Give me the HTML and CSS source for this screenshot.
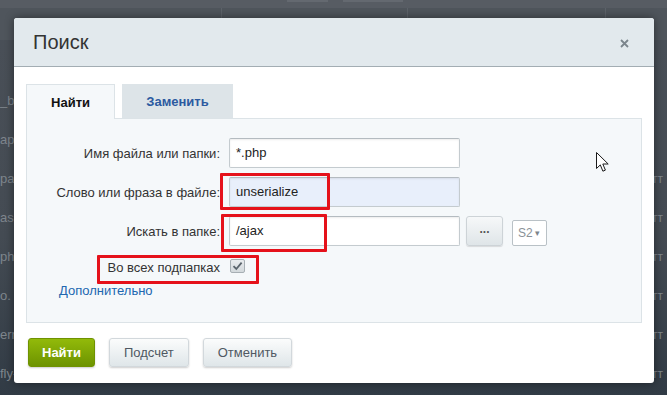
FILE: index.html
```html
<!DOCTYPE html>
<html lang="ru">
<head>
    <meta charset="UTF-8">
    <title>Поиск</title>
    <link rel="stylesheet" href="styles.css">
</head>
<body>
<div class="page">
    <div class="topbar">
        <div class="topbar-strip">
            <span class="top-btn top-btn-a"></span>
            <span class="top-btn top-btn-b"></span>
        </div>
        <div class="topbar-head">
            <span class="col col-1"></span>
            <span class="col col-2"></span>
            <span class="col col-3"></span>
        </div>
    </div>
    <div class="rows">
        <div class="bg-row"><span class="bg-name">_bak</span><span class="bg-tail"></span></div>
        <div class="bg-row"><span class="bg-name">ap.php</span><span class="bg-tail"></span></div>
        <div class="bg-row"><span class="bg-name">pass</span><span class="bg-tail">тт</span></div>
        <div class="bg-row"><span class="bg-name">ask</span><span class="bg-tail">тт</span></div>
        <div class="bg-row"><span class="bg-name">php</span><span class="bg-tail">тт</span></div>
        <div class="bg-row"><span class="bg-name">o.</span><span class="bg-tail">тт</span></div>
        <div class="bg-row"><span class="bg-name">err</span><span class="bg-tail">тт</span></div>
        <div class="bg-row"><span class="bg-name">fly-</span><span class="bg-tail">тт</span></div>
    </div>
</div>

<div class="dialog">
    <div class="dialog-head">
        <span class="dialog-title">Поиск</span>
        <span class="dialog-close">
            <svg width="9" height="9" viewBox="0 0 9 9"><path d="M1 1L8 8M8 1L1 8" stroke="#7b858c" stroke-width="1.8"/></svg>
        </span>
    </div>

    <div class="dialog-body">
        <div class="tabs">
            <div class="tab tab-active">Найти</div>
            <div class="tab">Заменить</div>
        </div>

        <div class="panel">
            <div class="form-row">
                <label class="form-label">Имя файла или папки:</label>
                <div class="field">*.php</div>
            </div>
            <div class="form-row">
                <label class="form-label">Слово или фраза в файле:</label>
                <div class="field field-filled">unserialize</div>
            </div>
            <div class="form-row form-row-wide">
                <label class="form-label">Искать в папке:</label>
                <div class="field">/ajax</div>
                <button class="dots-button">...</button>
                <div class="site-select">S2 <span class="caret">&#9662;</span></div>
            </div>
            <div class="form-row form-row-check">
                <label class="form-label">Во всех подпапках</label>
                <span class="checkbox">
                    <svg width="11" height="10" viewBox="0 0 11 10"><path d="M1.5 5.2L4.3 8L9.6 1.6" fill="none" stroke="#5a646c" stroke-width="1.8"/></svg>
                </span>
            </div>
            <a class="more-link" href="#">Дополнительно</a>
        </div>

        <div class="dialog-foot">
            <button class="btn btn-green">Найти</button>
            <button class="btn">Подсчет</button>
            <button class="btn">Отменить</button>
        </div>
    </div>

    <!-- red annotation frames -->
    <span class="mark mark-word"></span>
    <span class="mark mark-folder"></span>
    <span class="mark mark-sub"></span>
</div>

<svg class="cursor" width="13" height="21" viewBox="0 0 13 21">
    <path d="M0.5 0.5V16.5L4.3 12.9L6.9 19.2L9.4 18.1L6.8 12H12.2Z" fill="#fff" stroke="#1a1a1a" stroke-width="1" stroke-linejoin="round"/>
</svg>
</body>
</html>
```

FILE: styles.css
```css
:root {
    --page-bg: #454b53;
    --head-bg: #e2e9ed;
    --panel-bg: #f5f8fa;
    --panel-border: #dce3e7;
    --text: #333;
    --link: #2067b0;
    --mark-red: #e5111a;
}

* {
    box-sizing: border-box;
}

body {
    margin: 0;
    width: 667px;
    height: 395px;
    overflow: hidden;
    position: relative;
    font-family: 'Liberation Sans', Arial, sans-serif;
    font-size: 13px;
    color: var(--text);
    background: linear-gradient(#4a5058, #444b53 60%, #313b45);
}

/* page behind the dialog */
.topbar {
    height: 40px;
}

.topbar-strip {
    height: 8px;
    background-color: #575c63;
    position: relative;
}

.top-btn {
    position: absolute;
    top: 0;
    height: 2px;
    background-color: #646970;
}

.top-btn-a {
    left: 287px;
    width: 41px;
}

.top-btn-b {
    left: 343px;
    width: 60px;
}

.topbar-head {
    height: 32px;
    background-color: #4f555c;
    display: flex;
}

.col {
    height: 100%;
    border-right: 1px solid #5d636a;
}

.col-1 { width: 222px; }
.col-2 { width: 186px; }
.col-3 { width: 198px; }

.rows {
    padding-top: 41px;
}

.bg-row {
    height: 39px;
    display: flex;
    align-items: center;
    justify-content: space-between;
    color: #7f868d;
    font-size: 13px;
}

.bg-name {
    margin-left: 0;
}

.bg-tail {
    margin-right: 4px;
    font-size: 12px;
}

/* dialog */
.dialog {
    position: absolute;
    left: 14px;
    top: 18px;
    width: 640px;
    height: 365px;
    background-color: #fff;
    border-radius: 3px;
    box-shadow: 0 0 10px rgba(0, 0, 0, 0.45);
}

.dialog-head {
    height: 49px;
    background-color: var(--head-bg);
    border-bottom: 1px solid #a3adb3;
    border-radius: 3px 3px 0 0;
    display: flex;
    align-items: center;
    justify-content: space-between;
    padding: 0 25px 0 19px;
}

.dialog-title {
    font-size: 20px;
    color: #333;
    padding-top: 1px;
}

.dialog-close {
    display: flex;
    padding-top: 3px;
}

.dialog-body {
    padding: 17px 12px 0;
}

.tabs {
    display: flex;
    align-items: flex-end;
    gap: 7px;
}

.tab {
    width: 111px;
    height: 34px;
    display: flex;
    align-items: center;
    justify-content: center;
    font-weight: bold;
    color: #2c5aa0;
    background-color: #dde4e8;
}

.tab-active {
    width: 89px;
    height: 35px;
    color: #111;
    background-color: var(--panel-bg);
    border: 1px solid var(--panel-border);
    border-bottom: none;
    margin-bottom: -1px;
    position: relative;
}

.panel {
    height: 205px;
    background-color: var(--panel-bg);
    border: 1px solid var(--panel-border);
    padding-top: 19px;
}

.form-row {
    display: flex;
    align-items: center;
    height: 30px;
    margin-bottom: 9px;
}

.form-row-wide {
    margin-top: 2px;
}

.form-label {
    width: 193px;
    margin-right: 9px;
    text-align: right;
}

.field {
    width: 231px;
    height: 30px;
    background-color: #fff;
    border: 1px solid #c4cbcf;
    border-top-color: #b4bbc0;
    border-radius: 2px;
    box-shadow: inset 0 1px 2px rgba(0, 0, 0, 0.08);
    padding: 0 6px;
    line-height: 28px;
    font-size: 13px;
    color: #222;
}

.field-filled {
    background-color: #e8effb;
}

.dots-button {
    width: 37px;
    height: 30px;
    margin-left: 6px;
    border: 1px solid #cdd3d7;
    border-radius: 3px;
    background: linear-gradient(#f6f8f9, #dfe5e8);
    box-shadow: 0 1px 1px rgba(0, 0, 0, 0.12);
    font-family: inherit;
    font-size: 12px;
    font-weight: bold;
    color: #555;
    padding: 0 0 4px;
}

.site-select {
    width: 35px;
    height: 26px;
    margin-left: 9px;
    margin-top: 4px;
    border: 1px solid #b9c1c6;
    border-radius: 2px;
    background-color: #fff;
    color: #8a9298;
    font-size: 12px;
    display: flex;
    align-items: center;
    padding-left: 5px;
    gap: 2px;
}

.caret {
    font-size: 9px;
    color: #7d858b;
}

.form-row-check {
    height: 14px;
    margin-top: 13px;
    margin-bottom: 0;
}

.form-row-check .form-label {
    margin-right: 10px;
    padding-top: 3px;
}

.checkbox {
    width: 15px;
    height: 14px;
    border: 1px solid #a7afb4;
    border-radius: 2px;
    background: linear-gradient(#e9ecee, #d3d9dc);
    display: flex;
    align-items: center;
    justify-content: center;
}

.more-link {
    display: inline-block;
    margin: 10px 0 0 32px;
    color: var(--link);
    text-decoration: none;
}

.dialog-foot {
    display: flex;
    padding: 15px 0 0 2px;
    gap: 13px;
}

.btn {
    height: 29px;
    padding: 0 14px;
    border: 1px solid #d2d8dc;
    border-radius: 3px;
    background: linear-gradient(#fbfcfc, #dfe6e9);
    box-shadow: 0 1px 2px rgba(0, 0, 0, 0.2);
    font-family: inherit;
    font-size: 13px;
    color: #4f5862;
}

.btn + .btn {
    margin-left: 1px;
}

.btn-green {
    border-color: #6f9200;
    background: linear-gradient(#92ba0a, #6d9300);
    color: #fff;
    font-weight: bold;
    padding: 0 13px;
}

/* annotation frames */
.mark {
    position: absolute;
    border: 3px solid var(--mark-red);
    border-radius: 1px;
}

.mark-word {
    left: 206px;
    top: 155px;
    width: 110px;
    height: 37px;
}

.mark-folder {
    left: 207px;
    top: 196px;
    width: 106px;
    height: 38px;
}

.mark-sub {
    left: 83px;
    top: 237px;
    width: 162px;
    height: 29px;
}

.cursor {
    position: absolute;
    left: 596px;
    top: 152px;
}
```
